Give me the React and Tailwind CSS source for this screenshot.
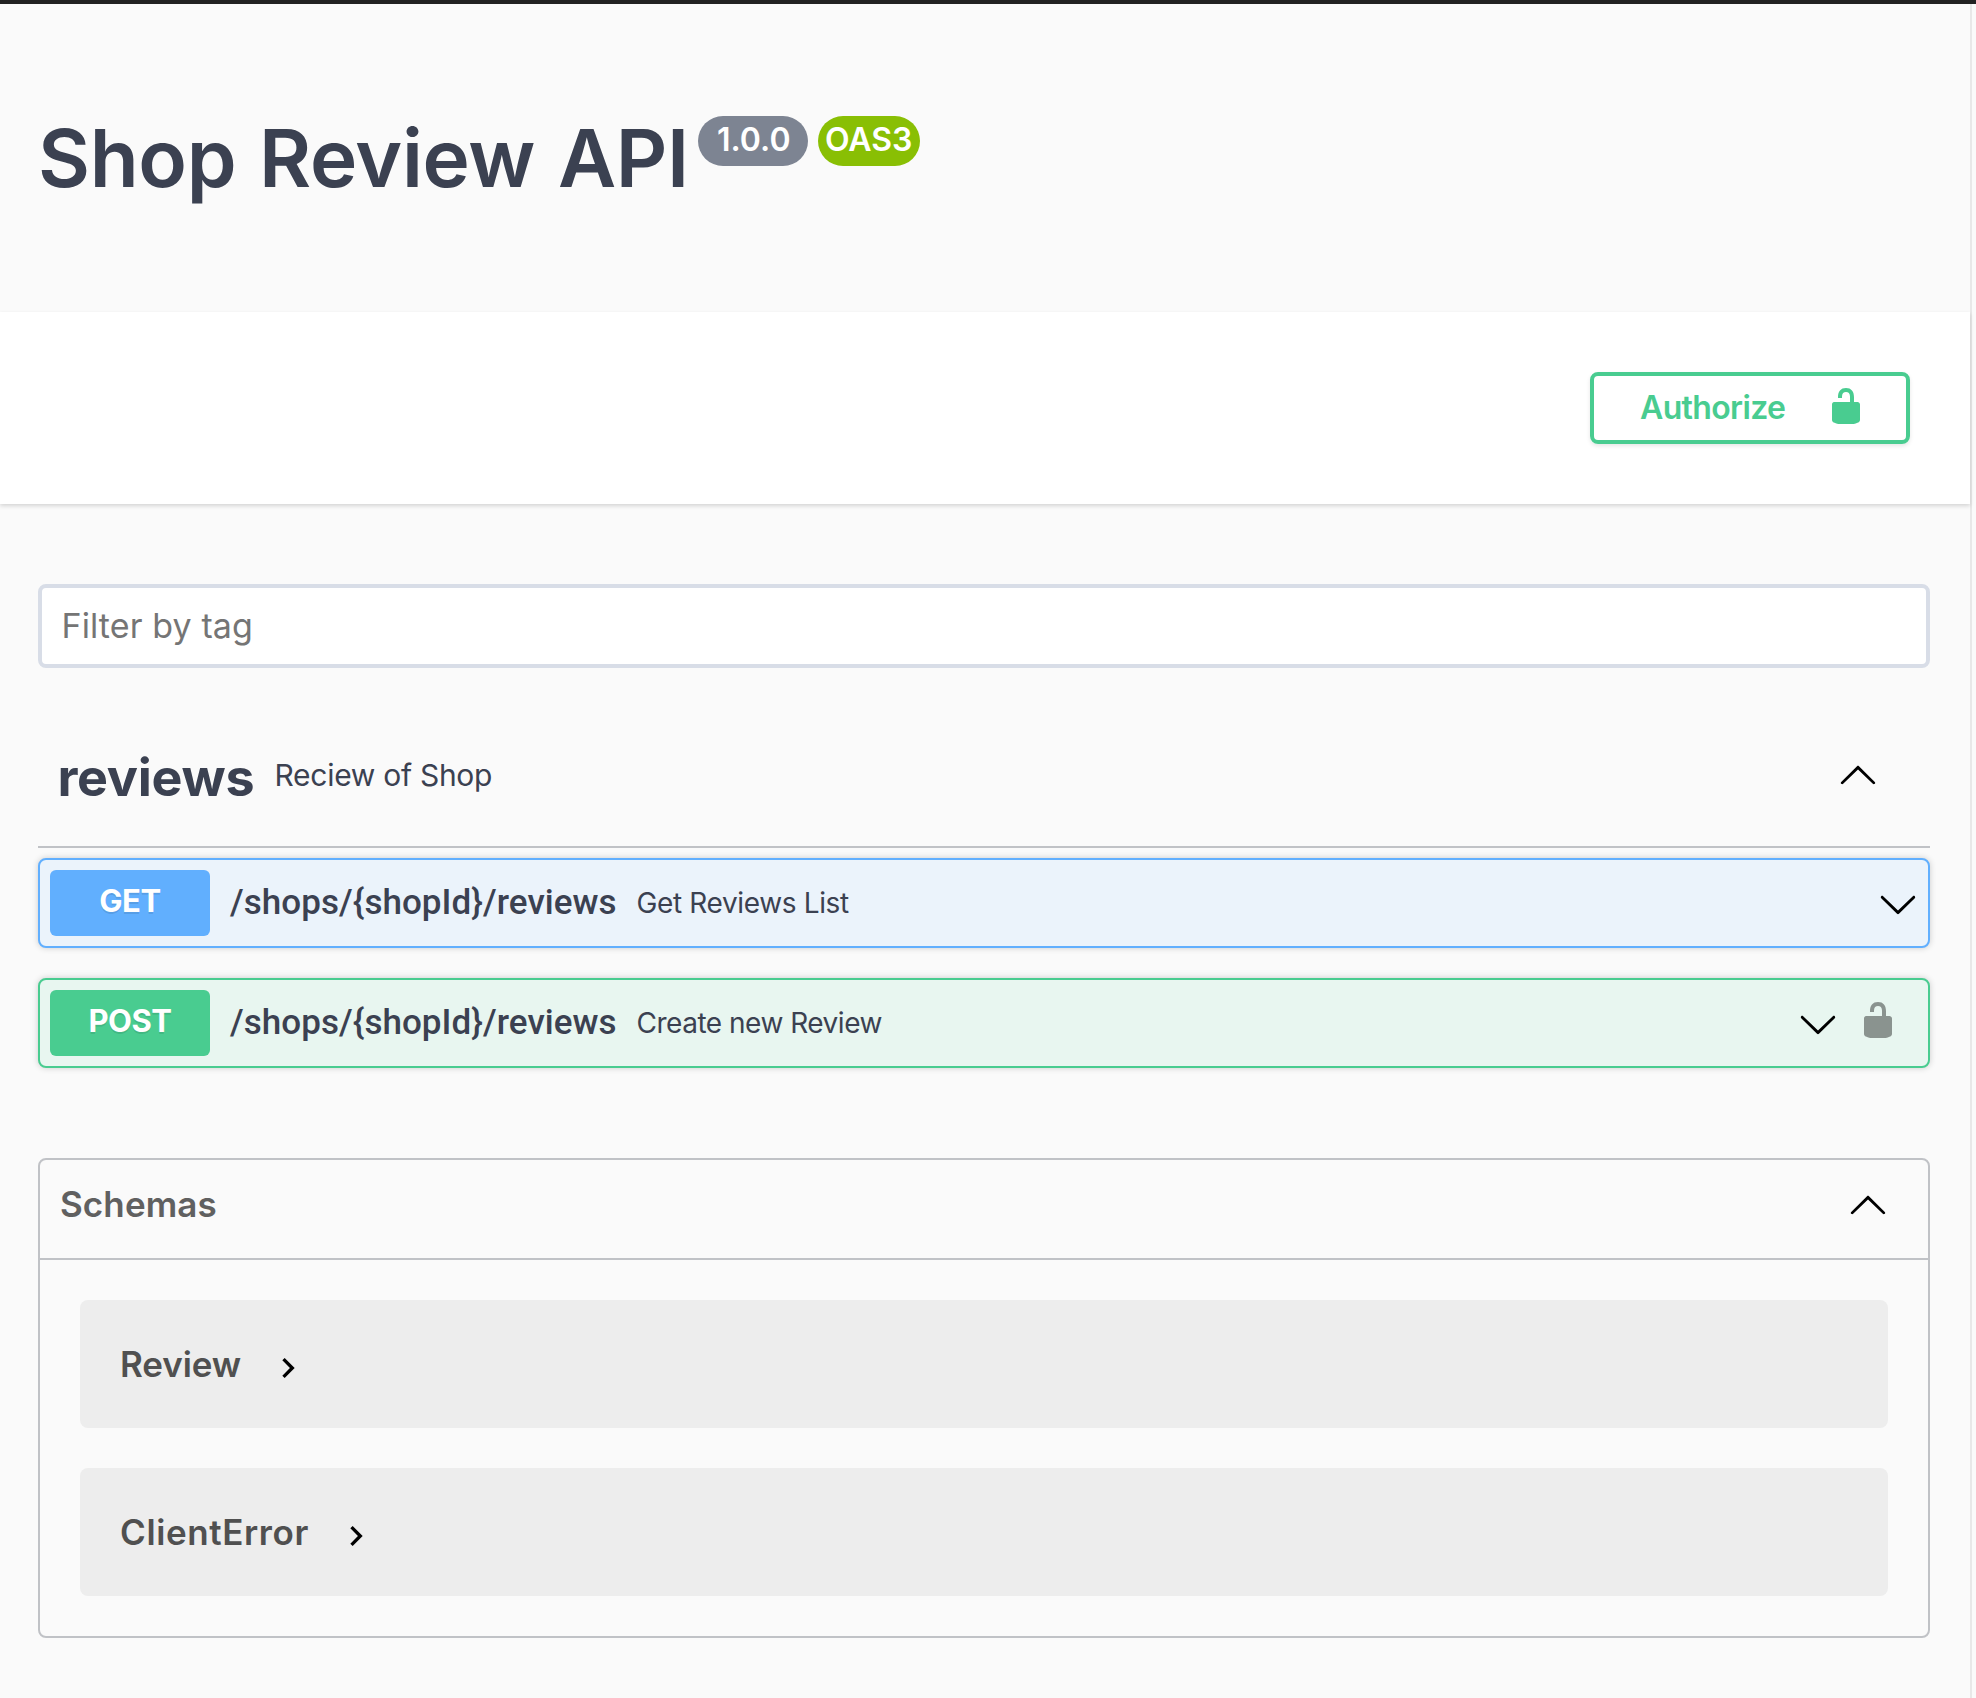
const ARROW_DOWN =
  "M17.418 6.109c.272-.268.709-.268.979 0s.271.701 0 .969l-7.908 7.83c-.27.268-.707.268-.979 0l-7.908-7.83c-.27-.268-.27-.701 0-.969.271-.268.709-.268.979 0L10 13.25l7.418-7.141z";
const ARROW_UP =
  "M17.418 14.908c.272.268.709.268.979 0s.271-.701 0-.969l-7.908-7.83c-.27-.268-.707-.268-.979 0l-7.908 7.83c-.27.268-.27.701 0 .969.271.268.709.268.979 0L10 7.767l7.418 7.141z";
const UNLOCKED =
  "M15.8 8H14V5.6C14 2.703 12.665 1 10 1 7.334 1 6 2.703 6 5.6V6h2v-.801C8 3.754 8.797 3 10 3c1.203 0 2 .754 2 2.199V8H4c-.553 0-1 .646-1 1.199V17c0 .549.428 1.139.951 1.307l1.197.387C5.672 18.861 6.55 19 7.1 19h5.8c.549 0 1.428-.139 1.951-.307l1.196-.387c.524-.167.953-.757.953-1.306V9.199C17 8.646 16.352 8 15.8 8z";

function Icon({ d, className = "" }) {
  return (
    <svg viewBox="0 0 20 20" className={`size-10 shrink-0 fill-current ${className}`}>
      <path d={d} />
    </svg>
  );
}

const METHODS = {
  GET: {
    row: "border-[#61affe] bg-[#ebf3fb] pr-[10px]",
    badge: "bg-[#61affe]",
  },
  POST: {
    row: "border-[#49cc90] bg-[#e8f6f0] pr-[30px]",
    badge: "bg-[#49cc90]",
  },
};

function Operation({ method, path, summary, summaryClass, locked }) {
  const m = METHODS[method];
  return (
    <div className={`flex h-[90px] items-center rounded-lg border-2 pl-[10px] shadow-[0_0_6px_rgba(0,0,0,0.19)] ${m.row}`}>
      <div className={`h-[66px] w-40 rounded-md text-center text-[31px] leading-[62px] font-bold tracking-[-0.5px] text-white [text-shadow:0_2px_0_rgba(0,0,0,0.1)] ${m.badge}`}>
        {method}
      </div>
      <div className="ml-5 w-[406.5px] font-['Roboto','Inter',sans-serif] text-[35px] leading-[64px] font-medium tracking-[0.05px] whitespace-nowrap">{path}</div>
      <div className={`grow text-[28px] leading-[64px] ${summaryClass}`}>{summary}</div>
      <Icon d={ARROW_DOWN} className="mt-[2px] text-black" />
      {locked && <Icon d={UNLOCKED} className="-mt-[6px] ml-5 text-black opacity-40" />}
    </div>
  );
}

function Model({ name, nameClass }) {
  return (
    <div className="flex h-32 items-center rounded-lg bg-[#ededed] pl-10 text-[#505050]">
      <span className={`text-[35px] leading-[64px] font-semibold ${nameClass}`}>{name}</span>
      <svg viewBox="0 0 24 24" className="mt-2 size-10 fill-black">
        <path d="M10 6L8.59 7.41 13.17 12l-4.58 4.59L10 18l6-6z" />
      </svg>
    </div>
  );
}

export default function App() {
  return (
    <div className="h-[1698px] overflow-hidden bg-[#fafafa] font-['Inter','Liberation_Sans',sans-serif] text-[#3b4151]">
      <div className="h-1 bg-[#222222]" />
      <div className="h-[1694px] w-[1972px] border-r-2 border-[#e8e8e8]">
        <header className="flex h-[308px] items-start pl-[38px]">
          <h1 className="mt-[114px] w-[651px] text-[80px] leading-[80px] font-semibold tracking-[-0.35px] whitespace-nowrap [word-spacing:3px]">Shop Review API</h1>
          <div className="mt-28 ml-[9px] flex gap-[10px] text-[32px] leading-[47px] font-semibold text-white">
            <span className="h-[50px] w-[110px] rounded-full bg-[#7d8492] pl-[19px]">1.0.0</span>
            <span className="h-[50px] w-[102px] rounded-full bg-[#89bf04] pl-[7px]">OAS3</span>
          </div>
        </header>

        <section className="flex h-48 items-start justify-end bg-white pt-[60px] pr-15 shadow-[0_2px_4px_rgba(0,0,0,0.15)]">
          <button className="flex h-[72px] w-80 justify-between rounded-lg border-4 border-[#49cc90] bg-transparent pr-10 pl-[46px] text-[32px] leading-[63px] font-semibold tracking-[-0.65px] text-[#49cc90] shadow-[0_2px_4px_rgba(0,0,0,0.1)]">
            Authorize
            <Icon d={UNLOCKED} className="mt-[10px]" />
          </button>
        </section>

        <main className="mr-10 ml-[38px] pt-20">
          <input
            className="block h-[84px] w-full rounded-lg border-4 border-[#d8dde7] bg-white pb-[2px] pl-[19.5px] text-[34px] tracking-[0.11px] placeholder:text-[#757575]"
            placeholder="Filter by tag"
          />

          <div className="mt-[68px] flex h-[112px] items-start border-b-2 border-[#3b4151]/30 pr-[52px] pl-[19.5px]">
            <h2 className="mt-[10px] w-[217px] text-[52px] leading-[64px] font-bold tracking-[-0.3px]">reviews</h2>
            <p className="mt-[7px] grow text-[30px] leading-[64px] tracking-[-0.28px]">Reciew of Shop</p>
            <Icon d={ARROW_UP} className="mt-[18px] text-black" />
          </div>

          <div className="mt-[10px] flex flex-col gap-[30px]">
            <Operation method="GET" path="/shops/{shopId}/reviews" summary="Get Reviews List" summaryClass="tracking-[-0.36px]" />
            <Operation method="POST" path="/shops/{shopId}/reviews" summary="Create new Review" summaryClass="tracking-[-0.49px]" locked />
          </div>

          <section className="mt-[90px] h-[480px] rounded-lg border-2 border-[#3b4151]/30">
            <div className="flex h-[100px] items-start border-b-2 border-[#3b4151]/30 pr-10 pl-5">
              <h3 className="mt-3 grow text-[35px] leading-[64px] font-semibold tracking-[0.1px] text-[#606060]">Schemas</h3>
              <Icon d={ARROW_UP} className="mt-6 text-black" />
            </div>
            <div className="flex flex-col gap-10 p-10">
              <Model name="Review" nameClass="w-[148px] tracking-[-0.1px]" />
              <Model name="ClientError" nameClass="w-[216px] tracking-[0.6px]" />
            </div>
          </section>
        </main>
      </div>
    </div>
  );
}
